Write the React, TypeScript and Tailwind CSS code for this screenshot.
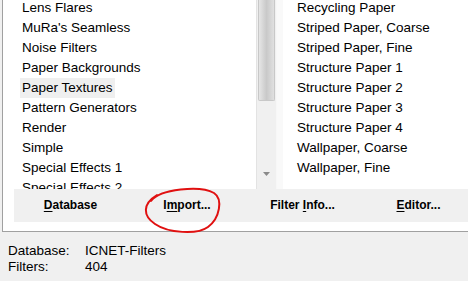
import React from 'react';

const leftItems = [
  'Lens Flares',
  "MuRa's Seamless",
  'Noise Filters',
  'Paper Backgrounds',
  'Paper Textures',
  'Pattern Generators',
  'Render',
  'Simple',
  'Special Effects 1',
  'Special Effects 2',
];

const rightItems = [
  'Recycling Paper',
  'Striped Paper, Coarse',
  'Striped Paper, Fine',
  'Structure Paper 1',
  'Structure Paper 2',
  'Structure Paper 3',
  'Structure Paper 4',
  'Wallpaper, Coarse',
  'Wallpaper, Fine',
];

const buttons = [
  { pre: '', key: 'D', post: 'atabase', w: 'w-[113px]' },
  { pre: 'I', key: 'm', post: 'port...', w: 'w-[120px]' },
  { pre: 'Filter ', key: 'I', post: 'nfo...', w: 'w-[111px]' },
  { pre: '', key: 'E', post: 'ditor...', w: 'w-[121px]' },
];

const App = () => {
  return (
    <div className="relative w-[468px] h-[281px] overflow-hidden bg-[#f0f0f0] text-black font-['Liberation_Sans',Arial,sans-serif]">
      <div className="ml-[2px] h-[232px] flex flex-col border-l border-b border-[#a0a0a0] bg-white">
        {/* lists */}
        <div className="flex h-[189px] overflow-hidden">
          <div className="w-[253px] shrink-0 overflow-hidden">
            <div className="-mt-[2px] flex flex-col">
              {leftItems.map((item) => (
                <div key={item} className="h-[20px] pl-[17px] text-[13.5px] leading-[20px]">
                  <span className={item === 'Paper Textures' ? 'inline-block bg-[#efefef] px-[2px]' : 'inline-block px-[2px]'}>
                    {item}
                  </span>
                </div>
              ))}
            </div>
          </div>

          {/* scrollbar */}
          <div className="w-[21px] shrink-0 flex flex-col bg-[#f0f0f0] border-l border-[#e3e3e3] border-r border-r-[#f7f7f7]">
            <div className="mx-[1px] h-[101px] rounded-b-[2px] border border-t-0 border-[#c8c8c8] bg-gradient-to-r from-[#e6e6e6] via-[#c9c9c9] to-[#e0e0e0]" />
            <div className="flex-1" />
            <div className="h-[26px] flex items-start justify-center pt-[9px]">
              <svg width="7" height="4" viewBox="0 0 7 4">
                <path d="M0 0 H7 L3.5 4 Z" fill="#8a8a8a" />
              </svg>
            </div>
          </div>

          <div className="w-[6px] shrink-0 bg-[#f9f9f9]" />

          <div className="flex-1 overflow-hidden">
            <div className="-mt-[2px] flex flex-col">
              {rightItems.map((item) => (
                <div key={item} className="h-[20px] pl-[14px] text-[13.5px] leading-[20px] whitespace-nowrap">
                  {item}
                </div>
              ))}
            </div>
          </div>
        </div>

        {/* button bar */}
        <div className="ml-[11px] h-[33px] flex items-center bg-[#f0f0f0]">
          {buttons.map((b) => (
            <div key={b.post} className={`${b.w} shrink-0 text-center text-[12px] font-bold leading-[33px] whitespace-nowrap`}>
              {b.pre}
              <span className="underline decoration-1 underline-offset-[2px]">{b.key}</span>
              {b.post}
            </div>
          ))}
        </div>
      </div>

      {/* status */}
      <div className="mt-[11px] px-[8px] text-[13.5px] leading-[16px]">
        <div className="flex">
          <span className="w-[77px]">Database:</span>
          <span>ICNET-Filters</span>
        </div>
        <div className="flex">
          <span className="w-[77px]">Filters:</span>
          <span>404</span>
        </div>
      </div>

      {/* red annotation circle */}
      <svg className="absolute left-0 top-0 pointer-events-none" width="468" height="281" viewBox="0 0 468 281">
        <path
          d="M151 201 C 160 189, 200 185, 214 193 C 223 199, 220 218, 208 227 C 197 235, 168 233, 155 224 C 143 216, 142 204, 157 195"
          fill="none"
          stroke="#e01010"
          strokeWidth="2"
          strokeLinecap="round"
        />
      </svg>
    </div>
  );
};

export default App;
